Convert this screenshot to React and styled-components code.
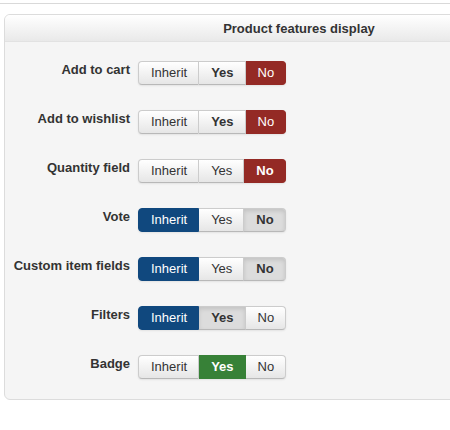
import styled, { createGlobalStyle, css } from 'styled-components';

const GlobalStyle = createGlobalStyle`
  html, body {
    margin: 0;
    padding: 0;
    background: #ffffff;
    overflow: hidden;
  }
  body {
    font-family: 'Liberation Sans', Arial, sans-serif;
    color: #333333;
  }
`;

const Page = styled.div`
  width: 450px;
  height: 430px;
  padding-top: 3px;
  box-sizing: border-box;
  overflow: hidden;
`;

const TopRule = styled.div`
  height: 1px;
  background: #d9d9d9;
`;

const Panel = styled.div`
  width: 592px;
  margin: 10px 0 0 4px;
  border: 1px solid #dcdcdc;
  border-radius: 6px;
  background: #f5f5f5;
  overflow: hidden;
`;

const PanelHeader = styled.div`
  height: 27px;
  display: flex;
  align-items: center;
  justify-content: center;
  background: linear-gradient(to bottom, #ffffff, #e9e9e9);
  border-bottom: 1px solid #e2e2e2;
  font-size: 13px;
  font-weight: bold;
  color: #333333;
  padding: 1px 4px 0 0;
  box-sizing: border-box;
`;

const PanelBody = styled.div`
  display: flex;
  flex-direction: column;
  gap: 25px;
  padding: 19px 0 20px;
`;

const Row = styled.div`
  display: flex;
  align-items: flex-start;
  gap: 8px;
`;

const Label = styled.div`
  width: 125px;
  text-align: right;
  font-size: 13px;
  font-weight: bold;
  line-height: 16px;
  padding-top: 1px;
  color: #333333;
`;

const Group = styled.div`
  display: flex;
  border-radius: 4px;
  box-shadow: 0 1px 2px rgba(0, 0, 0, 0.08);
`;

const tones = {
  plain: css`
    background: linear-gradient(to bottom, #ffffff, #e6e6e6);
    color: #333333;
  `,
  grey: css`
    background: #dcdcdc;
    color: #333333;
    box-shadow: inset 0 2px 4px rgba(0, 0, 0, 0.12);
  `,
  red: css`
    background: #942a25;
    border-color: #942a25;
    color: #ffffff;
  `,
  blue: css`
    background: #10487e;
    border-color: #10487e;
    color: #ffffff;
  `,
  green: css`
    background: #378137;
    border-color: #378137;
    color: #ffffff;
  `,
};

const Option = styled.button`
  height: 24px;
  padding: 0 11px 0 12px;
  margin: 0;
  font-family: 'Liberation Sans', Arial, sans-serif;
  font-size: 13px;
  line-height: 22px;
  font-weight: ${({ $bold }) => ($bold ? 'bold' : 'normal')};
  border: 1px solid #cccccc;
  border-bottom-color: #b8b8b8;
  border-left-width: 0;
  cursor: pointer;
  ${({ $tone }) => tones[$tone]}

  &:first-child {
    border-left-width: 1px;
    border-radius: 4px 0 0 4px;
  }
  &:last-child {
    border-radius: 0 4px 4px 0;
  }
`;

const rows = [
  { label: 'Add to cart', opts: [['Inherit', 'plain', false], ['Yes', 'plain', true], ['No', 'red', false]] },
  { label: 'Add to wishlist', opts: [['Inherit', 'plain', false], ['Yes', 'plain', true], ['No', 'red', false]] },
  { label: 'Quantity field', opts: [['Inherit', 'plain', false], ['Yes', 'plain', false], ['No', 'red', true]] },
  { label: 'Vote', opts: [['Inherit', 'blue', false], ['Yes', 'plain', false], ['No', 'grey', true]] },
  { label: 'Custom item fields', opts: [['Inherit', 'blue', false], ['Yes', 'plain', false], ['No', 'grey', true]] },
  { label: 'Filters', opts: [['Inherit', 'blue', false], ['Yes', 'grey', true], ['No', 'plain', false]] },
  { label: 'Badge', opts: [['Inherit', 'plain', false], ['Yes', 'green', true], ['No', 'plain', false]] },
];

export default function App() {
  return (
    <Page>
      <GlobalStyle />
      <TopRule />
      <Panel>
        <PanelHeader>Product features display</PanelHeader>
        <PanelBody>
          {rows.map((row) => (
            <Row key={row.label}>
              <Label>{row.label}</Label>
              <Group>
                {row.opts.map(([text, tone, bold]) => (
                  <Option key={text} $tone={tone} $bold={bold}>
                    {text}
                  </Option>
                ))}
              </Group>
            </Row>
          ))}
        </PanelBody>
      </Panel>
    </Page>
  );
}
